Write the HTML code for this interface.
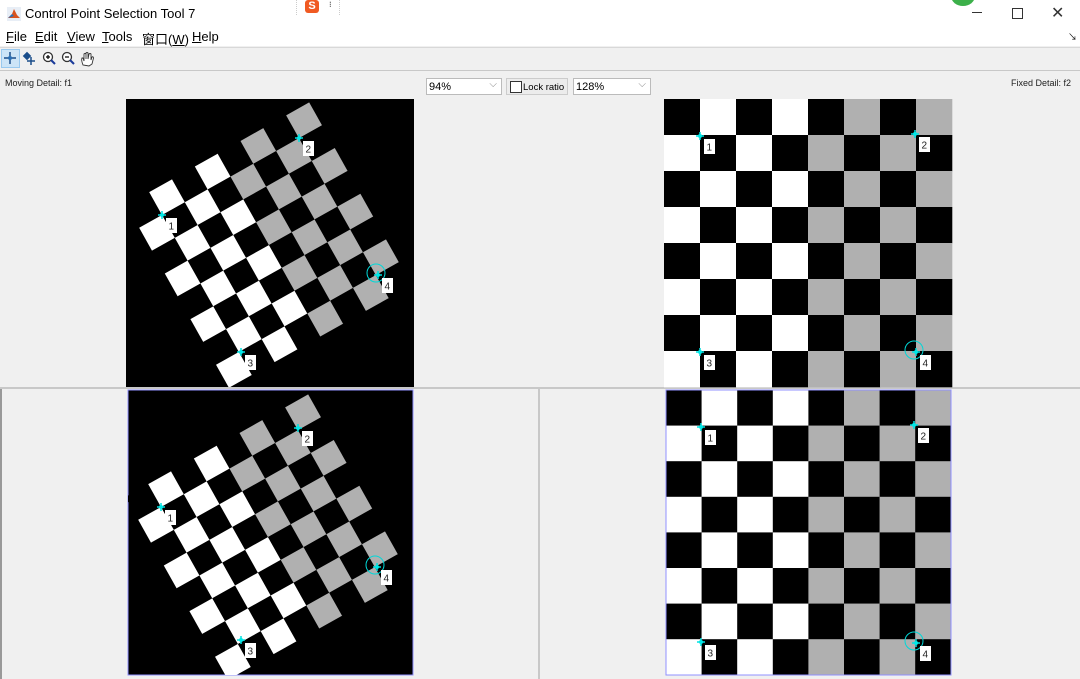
<!DOCTYPE html>
<html><head><meta charset="utf-8">
<style>
body{margin:0;width:1080px;height:679px;overflow:hidden;background:#f0f0f0;font-family:"Liberation Sans","Noto Sans CJK SC",sans-serif;position:relative}
.abs{position:absolute}
#title{left:0;top:0;width:1080px;height:28px;background:#fff}
#menu{left:0;top:28px;width:1080px;height:18px;background:#fff;font-size:13px}
#menu span{position:absolute;top:1px}
#tb{left:0;top:47px;width:1080px;height:22px;background:#f0f0f0;border-top:1px solid #d8d8d8;border-bottom:1px solid #c8c8c8}
.lbl{font-size:9px;color:#222}
.sel{background:#fff;border:1px solid #bbb;height:17px;font-size:11px;box-sizing:border-box;padding:2px 0 0 2px}
.sel:after{content:"⌵";position:absolute;right:4px;top:0px;font-size:10px;color:#888}
</style></head><body>
<div id="title" class="abs">
  <svg class="abs" style="left:7px;top:7px" width="14" height="14"><rect width="14" height="14" fill="#e8eef6"/><path d="M1 11 L5 7 L7 2 L10 8 L13 11 Z" fill="#d9531e"/><path d="M1 11 L5 7 L7 9 Z" fill="#2a6fb5"/></svg>
  <div class="abs" style="left:25px;top:6px;font-size:13px;color:#000">Control Point Selection Tool 7</div>
  <div class="abs" style="left:296px;top:0;width:42px;height:15px;background:#fff;border-right:1px dotted #ccc;border-left:1px dotted #ccc"><div class="abs" style="left:8px;top:0;width:14px;height:13px;background:#f05a22;border-radius:3px;color:#fff;font-size:11px;font-weight:bold;text-align:center;line-height:13px">S</div><div class="abs" style="left:32px;top:0;font-size:8px">⁝</div></div>
  <div class="abs" style="left:951px;top:-14px;width:24px;height:20px;border-radius:50%;background:#3cb04a"></div>
  <div class="abs" style="left:972px;top:12px;width:10px;height:1px;background:#333"></div>
  <div class="abs" style="left:1012px;top:8px;width:9px;height:9px;border:1px solid #333"></div>
  <div class="abs" style="left:1051px;top:3px;font-size:16px;color:#333">✕</div>
</div>
<div id="menu" class="abs">
  <span style="left:6px"><u>F</u>ile</span><span style="left:35px"><u>E</u>dit</span><span style="left:67px"><u>V</u>iew</span><span style="left:102px"><u>T</u>ools</span><span style="left:142px">窗口(<u>W</u>)</span><span style="left:192px"><u>H</u>elp</span>
  <span style="left:1068px;top:2px;font-size:9px">↘</span>
</div>
<div id="tb" class="abs">
  <div class="abs" style="left:1px;top:1px;width:19px;height:19px;background:#cce4f7;border:1px solid #99c9ef;box-sizing:border-box"></div>
  <svg class="abs" style="left:3px;top:3px" width="110" height="18">
   <path d="M7 1V13M1 7H13" stroke="#1a4d8a" stroke-width="1.5"/><circle cx="7" cy="7" r="2" fill="#2a6fb5"/>
   <rect x="21" y="2" width="6" height="6" fill="#1a4d8a" transform="rotate(45 24 5)"/><path d="M28 6V14M24 10H32" stroke="#1a4d8a" stroke-width="1.5"/>
   <circle cx="45" cy="6" r="4.5" fill="#fff" stroke="#333" stroke-width="1.3"/><path d="M43 6H47M45 4V8" stroke="#000" stroke-width="1.2"/><path d="M48 9L52 13" stroke="#1a3a9a" stroke-width="2"/>
   <circle cx="64" cy="6" r="4.5" fill="#fff" stroke="#333" stroke-width="1.3"/><path d="M62 6H66" stroke="#000" stroke-width="1.2"/><path d="M67 9L71 13" stroke="#1a3a9a" stroke-width="2"/>
   <path d="M80 14 Q78 9 79 7 L80 7 L81 10 L81 3 Q82 2 83 3 L83 8 L83 2 Q84 1 85 2 L85 8 L86 3 Q87 2 88 3 L88 9 L89 6 Q90 5 90.5 7 L89 13 L86 15 Z" fill="#fff" stroke="#333" stroke-width="0.9"/>
  </svg>
</div>
<div class="abs lbl" style="left:5px;top:78px">Moving Detail: f1</div>
<div class="abs lbl" style="left:1011px;top:78px">Fixed Detail: f2</div>
<div class="abs sel" style="left:426px;top:78px;width:76px">94%</div>
<div class="abs" style="left:506px;top:78px;width:62px;height:17px;border:1px solid #ccc;box-sizing:border-box;background:#ececec;font-size:9.5px;white-space:nowrap"><div class="abs" style="left:3px;top:2px;width:10px;height:10px;border:1px solid #333;background:#fff"></div><span class="abs" style="left:16px;top:3px">Lock ratio</span></div>
<div class="abs sel" style="left:573px;top:78px;width:78px">128%</div>
<div class="abs" style="left:0;top:387px;width:1080px;height:2px;background:#c8c8c8"></div>
<div class="abs" style="left:0;top:389px;width:2px;height:290px;background:#999"></div>
<div class="abs" style="left:538px;top:389px;width:2px;height:290px;background:#c8c8c8"></div>
<svg id="s" class="abs" style="left:0;top:0" width="1080" height="679"></svg>
<script>
var NS="http://www.w3.org/2000/svg",s=document.getElementById('s');
function el(t,a,p){var e=document.createElementNS(NS,t);for(var k in a)e.setAttribute(k,a[k]);(p||s).appendChild(e);return e;}
function board(g,x0,y0,q){for(var r=0;r<8;r++)for(var c=0;c<8;c++){var f=((r+c)%2==0)?'#000':(c<4?'#fff':'#b0b0b0');el('rect',{x:x0+c*q,y:y0+r*q,width:q+0.3,height:q+0.3,fill:f},g);}}
function marker(x,y,n,circ){
 if(circ)el('circle',{cx:x-2,cy:y-2,r:9,fill:'none',stroke:'#00d8d8','stroke-width':1});
 el('path',{d:'M'+(x-4)+' '+y+'H'+(x+4)+'M'+x+' '+(y-4)+'V'+(y+4),stroke:'#00e0e0','stroke-width':1.5});
 el('circle',{cx:x,cy:y,r:2,fill:'#00e8e8'});
 el('rect',{x:x+4,y:y+3,width:11,height:15,fill:'#fff'});
 var t=el('text',{x:x+6.5,y:y+14.5,'font-size':10,'font-family':'Liberation Sans',fill:'#222'});t.textContent=n;
}
function moving(x,y,w,h,p1,border){
 var cp=el('clipPath',{id:'c'+x+y});el('rect',{x:x,y:y,width:w,height:h},cp);
 el('rect',{x:x,y:y,width:w,height:h,fill:'#000',stroke:border,'stroke-width':1});
 var g=el('g',{'clip-path':'url(#c'+x+y+')'});
 var g2=el('g',{transform:'translate('+p1[0]+','+p1[1]+') rotate(-29.3) scale(0.727) translate(-36,-36)'},g);
 board(g2,0,0,36);
}
moving(126,99,288,288,[162,215],'none');
board(s,664,99,36);
moving(128,390,285,285,[161,507],'#9090ff');
var gg=el('g',{});board(gg,666,390,35.6);
el('rect',{x:666,y:390,width:285,height:285,fill:'none',stroke:'#9090ff','stroke-width':1});
marker(162,215,1);marker(299,138,2);marker(241,352,3);marker(378,275,4,1);
marker(700,136,1);marker(915,134,2);marker(700,352,3);marker(916,352,4,1);
marker(161,507,1);marker(298,428,2);marker(241,640,3);marker(377,567,4,1);
marker(701,427,1);marker(914,425,2);marker(701,642,3);marker(916,643,4,1);
</script>
</body></html>
